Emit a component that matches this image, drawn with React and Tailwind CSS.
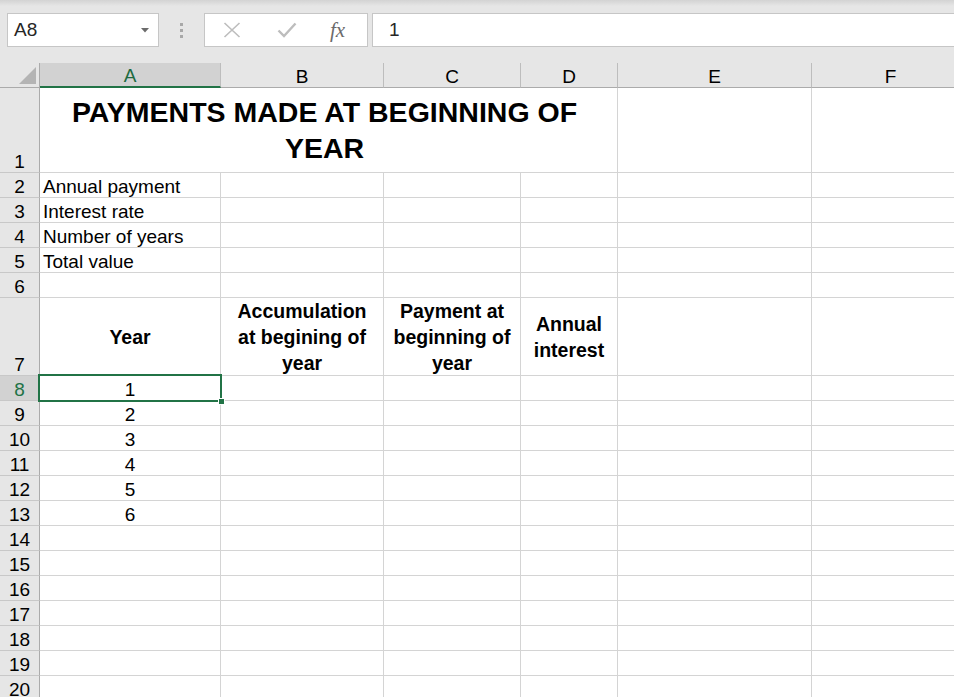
import React from "react";

const COLS = [
  { key: "A", w: "w-[181px]" },
  { key: "B", w: "w-[163px]" },
  { key: "C", w: "w-[137px]" },
  { key: "D", w: "w-[97px]" },
  { key: "E", w: "w-[194px]" },
  { key: "F", w: "w-[158px]" },
];

const labels = { 2: "Annual payment", 3: "Interest rate", 4: "Number of years", 5: "Total value" };

function RowHead({ n, h, selected }) {
  return (
    <div
      className={`shrink-0 w-[40px] ${h} flex items-end justify-center leading-[20px] border-b border-r border-[#c8c8c8] border-r-[#ababab] ${
        selected ? "bg-[#d2d2d2] text-[#217346]" : "bg-[#e6e6e6] text-black"
      }`}
    >
      {n}
    </div>
  );
}

function Cell({ w, h, children, className = "" }) {
  return (
    <div className={`shrink-0 ${w} ${h} border-r border-b border-[#d4d4d4] ${className}`}>{children}</div>
  );
}

function Toolbar() {
  return (
    <div className="relative h-[63px] shrink-0">
      <div className="absolute inset-x-0 top-0 h-[6px] bg-gradient-to-b from-[#d3d3d3] to-[#e6e6e6]" />
      <div className="flex items-center pt-[13px] pl-[7px]">
        {/* name box */}
        <div className="w-[152px] h-[34px] bg-white border border-[#c6c6c6] flex items-center justify-between pl-[6px] pr-[9px]">
          <span className="text-[19px] text-[#262626]">A8</span>
          <svg width="8" height="5" viewBox="0 0 8 5">
            <path d="M0 0 L8 0 L4 4.5 Z" fill="#6b6b6b" />
          </svg>
        </div>
        {/* dots */}
        <div className="w-[45px] flex flex-col items-center gap-[3px]">
          <span className="w-[3px] h-[3px] bg-[#a8a8a8]" />
          <span className="w-[3px] h-[3px] bg-[#a8a8a8]" />
          <span className="w-[3px] h-[3px] bg-[#a8a8a8]" />
        </div>
        {/* cancel / enter / fx */}
        <div className="w-[164px] h-[34px] bg-white border border-[#c6c6c6] flex items-center">
          <svg className="ml-[18px]" width="18" height="16" viewBox="0 0 18 16">
            <path d="M1.5 1 L16.5 15 M16.5 1 L1.5 15" stroke="#bdbdbd" strokeWidth="1.6" />
          </svg>
          <svg className="ml-[36px]" width="20" height="16" viewBox="0 0 20 16">
            <path d="M1.5 8.5 L7 14 L18.5 1.5" stroke="#bdbdbd" strokeWidth="2.4" fill="none" />
          </svg>
          <span className="ml-[33px] text-[21px] italic text-[#6b6b6b] font-['Liberation_Serif','Times_New_Roman',serif] leading-none">
            fx
          </span>
        </div>
        {/* formula input */}
        <div className="ml-[4px] flex-1 h-[34px] bg-white border border-r-0 border-[#c6c6c6] flex items-center pl-[16px]">
          <span className="text-[19px] text-[#262626]">1</span>
        </div>
      </div>
    </div>
  );
}

function ColumnHeader() {
  return (
    <div className="flex h-[25px] shrink-0">
      <div className="shrink-0 w-[40px] h-[25px] border-b border-r border-[#ababab] flex items-end justify-end pr-[3px] pb-[3px]">
        <svg width="17" height="17" viewBox="0 0 17 17">
          <path d="M17 0 L17 17 L0 17 Z" fill="#b4b4b4" />
        </svg>
      </div>
      {COLS.map((c) => (
        <div
          key={c.key}
          className={`shrink-0 ${c.w} h-[25px] border-r border-[#bdbdbd] flex items-end justify-center leading-[20px] ${
            c.key === "A"
              ? "bg-[#d2d2d2] border-b-2 border-b-[#217346] text-[#1d6a40]"
              : "border-b border-b-[#ababab] text-black"
          }`}
        >
          {c.key}
        </div>
      ))}
    </div>
  );
}

export default function App() {
  const rows = [];

  // row 1: merged title
  rows.push(
    <div key={1} className="flex">
      <RowHead n={1} h="h-[85px]" />
      <Cell w="w-[578px]" h="h-[85px]" className="flex items-end justify-center pb-[6px] pr-[8px]">
        <div className="text-center font-bold text-[28.5px] leading-[36px]">
          PAYMENTS MADE AT BEGINNING OF
          <br />
          YEAR
        </div>
      </Cell>
      <Cell w="w-[194px]" h="h-[85px]" />
      <Cell w="w-[158px]" h="h-[85px]" />
    </div>
  );

  // rows 2-6
  for (let r = 2; r <= 6; r++) {
    rows.push(
      <div key={r} className="flex">
        <RowHead n={r} h="h-[25px]" />
        {COLS.map((c) => (
          <Cell key={c.key} w={c.w} h="h-[25px]" className="flex items-end leading-[20px] pl-[3px] whitespace-nowrap overflow-visible">
            {c.key === "A" ? labels[r] : null}
          </Cell>
        ))}
      </div>
    );
  }

  // row 7: table headings
  const heads = {
    A: ["Year"],
    B: ["Accumulation", "at begining of", "year"],
    C: ["Payment at", "beginning of", "year"],
    D: ["Annual", "interest"],
  };
  rows.push(
    <div key={7} className="flex">
      <RowHead n={7} h="h-[78px]" />
      {COLS.map((c) => (
        <Cell key={c.key} w={c.w} h="h-[78px]" className="flex items-center justify-center">
          {heads[c.key] && (
            <div className="text-center font-bold text-[19.5px] leading-[26px] whitespace-nowrap">
              {heads[c.key].map((line, i) => (
                <div key={i}>{line}</div>
              ))}
            </div>
          )}
        </Cell>
      ))}
    </div>
  );

  // rows 8-20
  for (let r = 8; r <= 20; r++) {
    const year = r - 7;
    rows.push(
      <div key={r} className="flex">
        <RowHead n={r} h="h-[25px]" selected={r === 8} />
        {COLS.map((c) => (
          <Cell
            key={c.key}
            w={c.w}
            h="h-[25px]"
            className={`flex items-end justify-center leading-[20px] ${c.key === "A" && r === 8 ? "relative z-10" : ""}`}
          >
            {c.key === "A" && year <= 6 ? year : null}
            {c.key === "A" && r === 8 && (
              <>
                <div className="absolute -left-[2px] -top-[2px] -right-[2px] -bottom-[2px] border-2 border-[#217346] pointer-events-none" />
                <div className="absolute -right-[5px] -bottom-[5px] w-[7px] h-[7px] bg-[#217346] border border-white" />
              </>
            )}
          </Cell>
        ))}
      </div>
    );
  }

  return (
    <div className="w-[954px] h-[697px] overflow-hidden bg-[#e6e6e6] flex flex-col font-['Liberation_Sans',Arial,sans-serif] text-[19px] text-black">
      <Toolbar />
      <ColumnHeader />
      <div className="bg-white">{rows}</div>
    </div>
  );
}
